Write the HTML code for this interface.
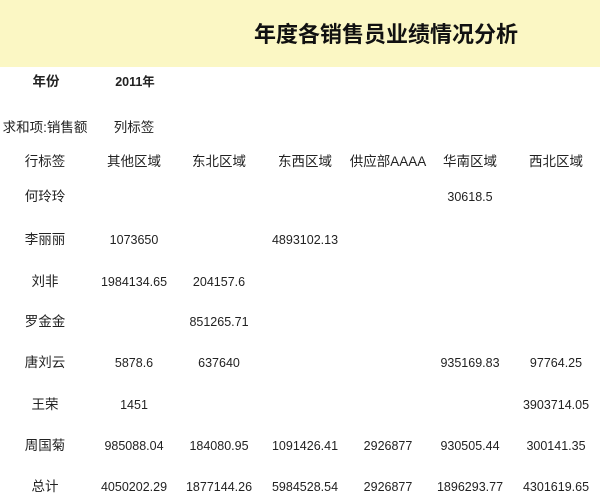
<!DOCTYPE html>
<html><head><meta charset="utf-8"><style>
body{margin:0;width:600px;height:493px;background:#fff;position:relative;overflow:hidden;font-family:"Liberation Sans","Noto Sans CJK SC",sans-serif;color:#222;}
.band{position:absolute;left:0;top:0;width:600px;height:67px;background:#fbf7c4;}
.t{position:absolute;white-space:nowrap;font-size:12.5px;line-height:16px;transform:translate(-50%,-50%);}
.c{font-size:13.5px;}
.title{position:absolute;left:386px;top:33px;transform:translate(-50%,-50%);font-size:22px;font-weight:bold;white-space:nowrap;color:#111;}
</style></head><body>
<div class="band"></div>
<div class="title">年度各销售员业绩情况分析</div>
<div class="t c" style="left:46px;top:82px;font-weight:bold">年份</div>
<div class="t" style="left:135px;top:82px;font-weight:bold">2011年</div>
<div class="t c" style="left:45px;top:128px">求和项:销售额</div>
<div class="t c" style="left:134px;top:128px">列标签</div>
<div id="g"></div>
<script>
var cx=[45,134,219,305,388,470,556];
var ys=[162,197,240,282,322,363,405,446,487];
var rows=[["行标签","其他区域","东北区域","东西区域","供应部AAAA","华南区域","西北区域"],
["何玲玲","","","","","30618.5",""],
["李丽丽","1073650","","4893102.13","","",""],
["刘非","1984134.65","204157.6","","","",""],
["罗金金","","851265.71","","","",""],
["唐刘云","5878.6","637640","","","935169.83","97764.25"],
["王荣","1451","","","","","3903714.05"],
["周国菊","985088.04","184080.95","1091426.41","2926877","930505.44","300141.35"],
["总计","4050202.29","1877144.26","5984528.54","2926877","1896293.77","4301619.65"]];
var h="";
rows.forEach(function(r,i){r.forEach(function(c,j){if(c){var cls=(i==0||j==0)?"t c":"t";h+='<div class="'+cls+'" style="left:'+cx[j]+'px;top:'+ys[i]+'px">'+c+'</div>';}});});
document.getElementById("g").innerHTML=h;
</script>
</body></html>
